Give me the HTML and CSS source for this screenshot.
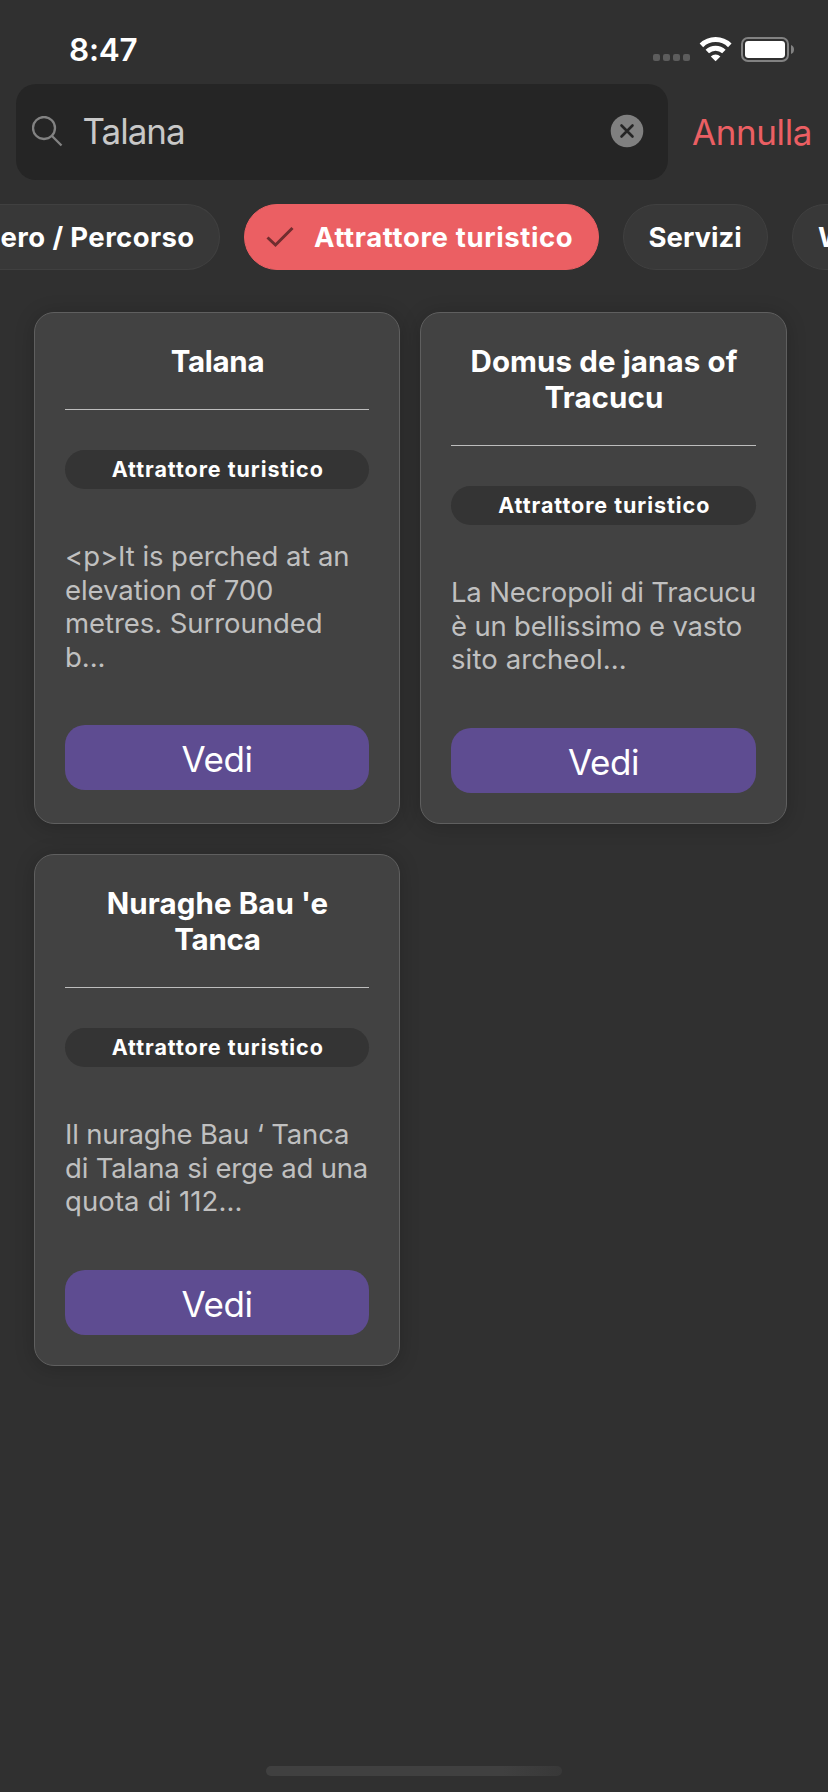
FILE: index.html
```html
<!DOCTYPE html>
<html lang="it">
<head>
<meta charset="utf-8">
<title>Cerca</title>
<link rel="stylesheet" href="styles.css">
</head>
<body>
<div class="screen">
  <header class="status">
    <span class="time">8:47</span>
    <div class="status-icons">
      <svg width="142" height="26" viewBox="0 0 142 26">
        <g fill="#5c5c5c"><rect x="0" y="17" width="7" height="7" rx="2"/><rect x="10" y="17" width="7" height="7" rx="2"/><rect x="20" y="17" width="7" height="7" rx="2"/><rect x="30" y="17" width="7" height="7" rx="2"/></g>
        <g fill="none" stroke="#fff" stroke-width="5"><path d="M48.4 8.4a20.3 20.3 0 0 1 28.4 0"/><path d="M54.3 14.5a12 12 0 0 1 16.6 0"/></g>
        <path d="M57.8 19.4a7 7 0 0 1 9.6 0L62.6 24.2z" fill="#fff"/>
        <rect x="89" y="1" width="46" height="23" rx="6" fill="none" stroke="#828282" stroke-width="2"/>
        <rect x="92" y="4" width="40" height="17" rx="3.4" fill="#fff"/>
        <path d="M138 8q3 1 3 4.500t-3 4.500z" fill="#828282"/>
      </svg>
    </div>
  </header>
  <div class="search-row">
    <div class="search">
      <svg class="lens" width="32" height="32" viewBox="0 0 32 32" fill="none" stroke="#828282" stroke-width="2.300"><circle cx="12" cy="12" r="11"/><path d="M20 20l9.500 9.500"/></svg>
      <span class="query">Talana</span>
      <svg class="clear" width="34" height="34" viewBox="0 0 34 34"><circle cx="17" cy="17" r="16.300" fill="#808080"/><path d="M11.500 11.500l11 11M22.500 11.500l-11 11" stroke="#252525" stroke-width="2.600" stroke-linecap="round"/></svg>
    </div>
    <span class="cancel">Annulla</span>
  </div>
  <nav class="chips">
    <span class="chip first">ero / Percorso</span>
    <span class="chip active"><svg width="28" height="22" viewBox="0 0 28 22" fill="none" stroke="#702d2f" stroke-width="3"><path d="M1.500 11.500l8 7.500L26.500 2"/></svg><span>Attrattore turistico</span></span>
    <span class="chip services">Servizi</span>
    <span class="chip last">W</span>
  </nav>
  <main class="cards">
    <article class="card">
      <h2 class="narrow">Talana</h2>
      <div class="badge">Attrattore turistico</div>
      <p>&lt;p&gt;It is perched at an<br>elevation of 700<br>metres. Surrounded<br>b...</p>
      <button>Vedi</button>
    </article>
    <article class="card">
      <h2>Domus de janas of<br>Tracucu</h2>
      <div class="badge">Attrattore turistico</div>
      <p><span class="tight">La Necropoli di Tracucu<br>è un bellissimo e vasto</span><br><span class="loose">sito archeol...</span></p>
      <button>Vedi</button>
    </article>
    <article class="card">
      <h2>Nuraghe Bau 'e<br><span class="narrow">Tanca</span></h2>
      <div class="badge">Attrattore turistico</div>
      <p><span class="tight">Il nuraghe Bau ‘ Tanca<br>di Talana si erge ad una</span><br><span class="loose">quota di 112...</span></p>
      <button>Vedi</button>
    </article>
  </main>
  <div class="home"></div>
</div>
</body>
</html>
```
FILE: styles.css
```css
* { box-sizing: border-box; }
body { margin: 0; background: #303030; font-family: Inter, "Liberation Sans", sans-serif; color: #fff; }
.screen { width: 828px; height: 1792px; overflow: hidden; display: flex; flex-direction: column; }
.status { height: 84px; display: flex; justify-content: space-between; padding: 31px 33px 0 69px; }
.time { font-size: 31.500px; font-weight: 600; line-height: 38px; letter-spacing: -.2px; }
.status-icons { padding-top: 6px; }
.search-row { display: flex; align-items: center; height: 96px; padding-left: 16px; gap: 24px; }
.search { width: 652px; height: 96px; border-radius: 20px; background: #252525; display: flex; align-items: center; padding: 0 24px 0 16px; }
.query { flex: 1; margin: -2px 0 0 18.500px; font-size: 35px; font-weight: 400; letter-spacing: -1px; color: #c8c8c8; }
.clear { margin-top: -2px; }
.cancel { font-size: 35px; font-weight: 400; letter-spacing: -.4px; color: #eb5f63; }
.chips { display: flex; gap: 24px; margin-top: 24px; height: 66px; }
.chip { flex: none; display: flex; align-items: center; height: 66px; border-radius: 33px; border: 1px solid #404040; background: #383838; font-size: 27.500px; font-weight: 700; white-space: nowrap; }
.chip.first { width: 220px; border-left: 0; border-radius: 0 33px 33px 0; padding-left: .5px; letter-spacing: .4px; }
.chip.active { width: 355px; border-color: #eb5f63; background: #eb5f63; padding-left: 21px; gap: 20px; letter-spacing: .62px; }
.chip.services { width: 145px; padding-left: 24.500px; }
.chip.last { width: 150px; padding-left: 25px; }
.cards { display: grid; grid-template-columns: 366px 367px; grid-auto-rows: 512px; gap: 30px 20px; margin: 42px 0 0 34px; }
.card { border: 1px solid #5f5f5f; border-radius: 20px; background: #424242; padding: 30px; box-shadow: 0 2px 20px rgba(0,0,0,.2); }
h2 { margin: 0; padding: 0 0 30px 1px; border-bottom: 1px solid #bdbdbd; text-align: center; font-size: 29.500px; line-height: 36px; font-weight: 700; letter-spacing: .1px; white-space: nowrap; }
.narrow { letter-spacing: -.3px; }
.badge { margin-top: 40px; height: 39px; line-height: 39px; padding-left: 1.500px; border-radius: 20px; background: #343434; text-align: center; font-size: 21.500px; font-weight: 700; letter-spacing: .95px; }
p { margin: 51.300px 0 51.350px; font-size: 27.500px; line-height: 33.400px; font-weight: 400; letter-spacing: -.06px; color: #c0c0c0; white-space: nowrap; }
.tight { letter-spacing: -.18px; }
.loose { letter-spacing: .1px; }
button { display: block; width: 100%; height: 65px; padding: 3px 0 0; border: 0; border-radius: 20px; background: #5e4c91; color: #fff; font: 400 35px/62px Inter, sans-serif; letter-spacing: -.4px; }
.home { position: absolute; left: 266px; top: 1766px; width: 296px; height: 10px; border-radius: 5px; background: linear-gradient(90deg, #404040 80%, #383838); }
```
